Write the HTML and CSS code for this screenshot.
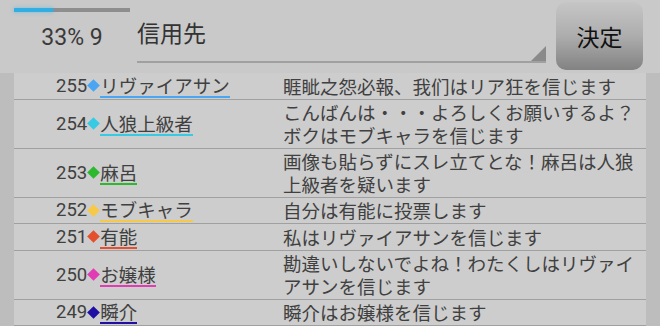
FILE: index.html
```html
<!DOCTYPE html>
<html lang="ja">
<head>
<meta charset="utf-8">
<title>信用先</title>
<link rel="stylesheet" href="styles.css">
</head>
<body>
<div class="app">
  <header class="header">
    <div class="stat">
      <div class="bar"><div class="fill" style="width:34%"></div></div>
      <div class="count">33% 9</div>
    </div>
    <div class="field">
      <span class="field-text">信用先</span>
    </div>
    <button class="btn">決定</button>
  </header>
  <main class="main">
    <div class="list">
      <div class="row">
        <div class="who"><span class="num">255</span><span class="dia c1"></span><span class="name u1">リヴァイアサン</span></div>
        <div class="msg">睚眦之怨必報、我们はリア狂を信じます</div>
      </div>
      <div class="row">
        <div class="who"><span class="num">254</span><span class="dia c2"></span><span class="name u2">人狼上級者</span></div>
        <div class="msg">こんばんは・・・よろしくお願いするよ？ボクはモブキャラを信じます</div>
      </div>
      <div class="row">
        <div class="who"><span class="num">253</span><span class="dia c3"></span><span class="name u3">麻呂</span></div>
        <div class="msg">画像も貼らずにスレ立てとな！麻呂は人狼上級者を疑います</div>
      </div>
      <div class="row">
        <div class="who"><span class="num">252</span><span class="dia c4"></span><span class="name u4">モブキャラ</span></div>
        <div class="msg">自分は有能に投票します</div>
      </div>
      <div class="row">
        <div class="who"><span class="num">251</span><span class="dia c5"></span><span class="name u5">有能</span></div>
        <div class="msg">私はリヴァイアサンを信じます</div>
      </div>
      <div class="row">
        <div class="who"><span class="num">250</span><span class="dia c6"></span><span class="name u6">お嬢様</span></div>
        <div class="msg">勘違いしないでよね！わたくしはリヴァイアサンを信じます</div>
      </div>
      <div class="row">
        <div class="who"><span class="num">249</span><span class="dia c7"></span><span class="name u7">瞬介</span></div>
        <div class="msg">瞬介はお嬢様を信じます</div>
      </div>
    </div>
  </main>
</div>
</body>
</html>
```

FILE: styles.css
```css
html, body {
  margin: 0;
  padding: 0;
}
body {
  width: 660px;
  height: 326px;
  overflow: hidden;
  background: #c9c9c9;
  font-family: Roboto, "Noto Sans CJK JP", sans-serif;
  color: #404040;
}
.app {
  display: flex;
  flex-direction: column;
  height: 326px;
}
.header {
  display: flex;
  height: 73px;
  padding-left: 14px;
  box-sizing: border-box;
}
.stat {
  width: 116px;
  display: flex;
  flex-direction: column;
}
.bar {
  margin-top: 8px;
  height: 4px;
  background: #8e8e8e;
}
.fill {
  height: 4px;
  background: #33aee0;
  box-shadow: 0 0 4px rgba(60, 180, 230, 0.6);
}
.count {
  margin-top: 12px;
  font-size: 23px;
  line-height: 27px;
  text-align: center;
  color: #3a3a3a;
}
.field {
  position: relative;
  margin-left: 7px;
  width: 409px;
  height: 63px;
  box-sizing: border-box;
  padding-top: 19px;
  border-bottom: 2px solid #a0a0a0;
}
.field::after {
  content: "";
  position: absolute;
  right: 0;
  bottom: 0;
  width: 15px;
  height: 15px;
  background: #8a8a8a;
  clip-path: polygon(100% 0, 100% 100%, 0 100%);
}
.field-text {
  font-family: "Noto Sans CJK JP", sans-serif;
  font-size: 23px;
  line-height: 27px;
  color: #333;
}
.btn {
  margin: 2px 0 0 10px;
  width: 87px;
  height: 68px;
  border: none;
  border-radius: 10px;
  background: linear-gradient(#c6c6c6, #adadad 50%, #828282);
  font-family: "Noto Sans CJK JP", sans-serif;
  font-size: 23px;
  color: #111;
  padding: 0;
}
.main {
  flex: 1;
  background: #bdbdbd;
  padding: 0 14px;
}
.list {
  background: #cdcdcd;
  height: 100%;
}
.row {
  display: flex;
  border-bottom: 1px solid #a0a0a0;
}
.who {
  width: 269px;
  flex: none;
  box-sizing: border-box;
  padding-left: 42px;
  display: flex;
  align-items: center;
  font-size: 18.5px;
}
.num {
  line-height: 22px;
}
.dia {
  width: 9px;
  height: 9px;
  margin: 0 2px;
  transform: rotate(45deg);
}
.name {
  font-family: "Noto Sans CJK JP", sans-serif;
  line-height: 22px;
  border-bottom: 2px solid;
}
.msg {
  flex: 1;
  font-family: "Noto Sans CJK JP", sans-serif;
  font-size: 18.5px;
  line-height: 22.5px;
  padding: 1.5px 0;
}
.c1 { background: #4aa6f2; }
.c2 { background: #36cbe2; }
.c3 { background: #2eb82e; }
.c4 { background: #f7c948; }
.c5 { background: #e4502e; }
.c6 { background: #e23cb4; }
.c7 { background: #1f0fa3; }
.u1 { border-color: #4aa6f2; }
.u2 { border-color: #36cbe2; }
.u3 { border-color: #2eb82e; }
.u4 { border-color: #f7c948; }
.u5 { border-color: #e4502e; }
.u6 { border-color: #e23cb4; }
.u7 { border-color: #1f0fa3; }
```
